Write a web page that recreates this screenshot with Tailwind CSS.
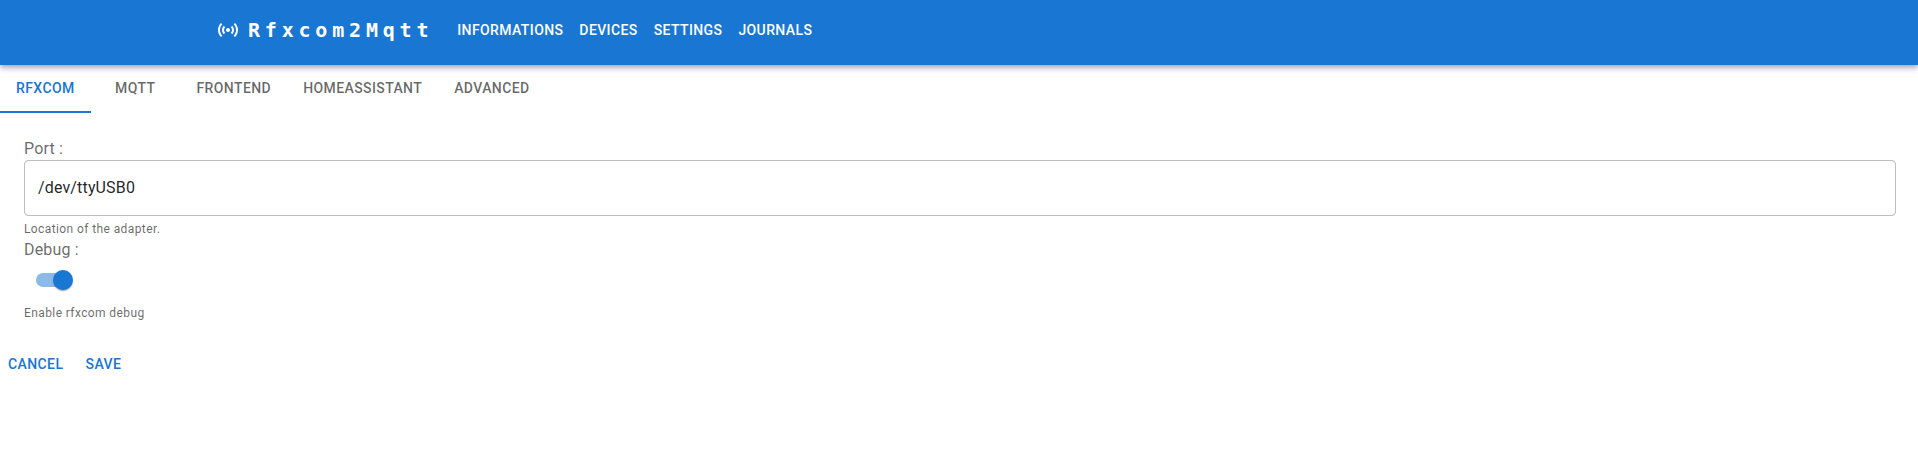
<!DOCTYPE html>
<html lang="en">
<head>
<meta charset="utf-8">
<title>Rfxcom2Mqtt</title>
<script src="https://cdn.jsdelivr.net/npm/@tailwindcss/browser@4"></script>
</head>
<body class="bg-white font-['Roboto',sans-serif] text-black/87">
<header class="relative h-[65px] bg-[#1976d2] text-white shadow-[0_2px_4px_-1px_rgba(0,0,0,0.2),0_4px_5px_0_rgba(0,0,0,0.14),0_1px_10px_0_rgba(0,0,0,0.12)]">
  <div class="flex h-[60px] items-center pl-[216px]">
    <svg class="mr-2 size-6" viewBox="0 0 24 24" fill="currentColor"><path d="M7.76 16.24C6.67 15.16 6 13.66 6 12s.67-3.16 1.76-4.24l1.42 1.42C8.45 9.9 8 10.9 8 12c0 1.1.45 2.1 1.17 2.83l-1.41 1.41zm8.48 0C17.33 15.16 18 13.66 18 12s-.67-3.16-1.76-4.24l-1.42 1.42C15.55 9.9 16 10.9 16 12c0 1.1-.45 2.1-1.17 2.83l1.41 1.41zM12 10c-1.1 0-2 .9-2 2s.9 2 2 2 2-.9 2-2-.9-2-2-2zm8 2c0 2.21-.9 4.21-2.35 5.65l1.42 1.42C20.88 17.26 22 14.76 22 12s-1.12-5.26-2.93-7.07l-1.42 1.42C19.1 7.79 20 9.79 20 12zM6.35 6.35 4.93 4.93C3.12 6.74 2 9.24 2 12s1.12 5.26 2.93 7.07l1.42-1.42C4.9 16.21 4 14.21 4 12s.9-4.21 2.35-5.65z"/></svg>
    <span class="mr-4 font-['DejaVu_Sans_Mono',monospace] text-xl leading-8 font-bold tracking-[0.3rem]">Rfxcom2Mqtt</span>
    <nav class="flex text-sm font-medium tracking-[0.39px] uppercase">
      <a class="px-2">Informations</a><a class="px-2">Devices</a><a class="px-2">Settings</a><a class="px-2">Journals</a>
    </nav>
  </div>
</header>
<div class="flex h-12 text-sm font-medium tracking-[0.4px] text-black/60 uppercase">
  <div class="flex w-[91px] items-center border-b-2 border-[#1976d2] pl-4 text-[#1976d2]">Rfxcom</div>
  <div class="flex w-[89.5px] items-center justify-center pr-px pb-0.5">Mqtt</div>
  <div class="flex items-center px-4 pb-0.5">Frontend</div>
  <div class="flex items-center px-4 pb-0.5">Homeassistant</div>
  <div class="flex items-center px-4 pb-0.5">Advanced</div>
</div>
<main class="pt-6 pr-[22px] pl-6">
  <div class="text-base leading-[23px] tracking-[0.15px] text-black/60">Port :</div>
  <div class="flex h-14 items-center rounded border border-black/26 px-[13px] tracking-[0.15px]">/dev/ttyUSB0</div>
  <div class="mt-[3px] text-xs leading-5 tracking-[0.4px] text-black/60">Location of the adapter.</div>
  <div class="-mt-px text-base leading-[23px] tracking-[0.15px] text-black/60">Debug :</div>
  <div class="flex h-[38px] w-[58px] items-center px-3">
    <div class="flex h-3.5 w-[34px] items-center justify-end rounded-full bg-[#1976d2]/50">
      <div class="-mr-[3px] size-5 shrink-0 rounded-full bg-[#1976d2] shadow-[0_2px_1px_-1px_rgba(0,0,0,0.2),0_1px_1px_0_rgba(0,0,0,0.14),0_1px_3px_0_rgba(0,0,0,0.12)]"></div>
    </div>
  </div>
  <div class="mt-1 text-xs leading-5 tracking-[0.4px] text-black/60">Enable rfxcom debug</div>
</main>
<div class="flex pt-[23px] text-sm font-medium tracking-[0.4px] text-[#1976d2] uppercase">
  <button class="h-9 px-2 uppercase">Cancel</button>
  <button class="h-9 w-16 uppercase">Save</button>
</div>
</body>
</html>
